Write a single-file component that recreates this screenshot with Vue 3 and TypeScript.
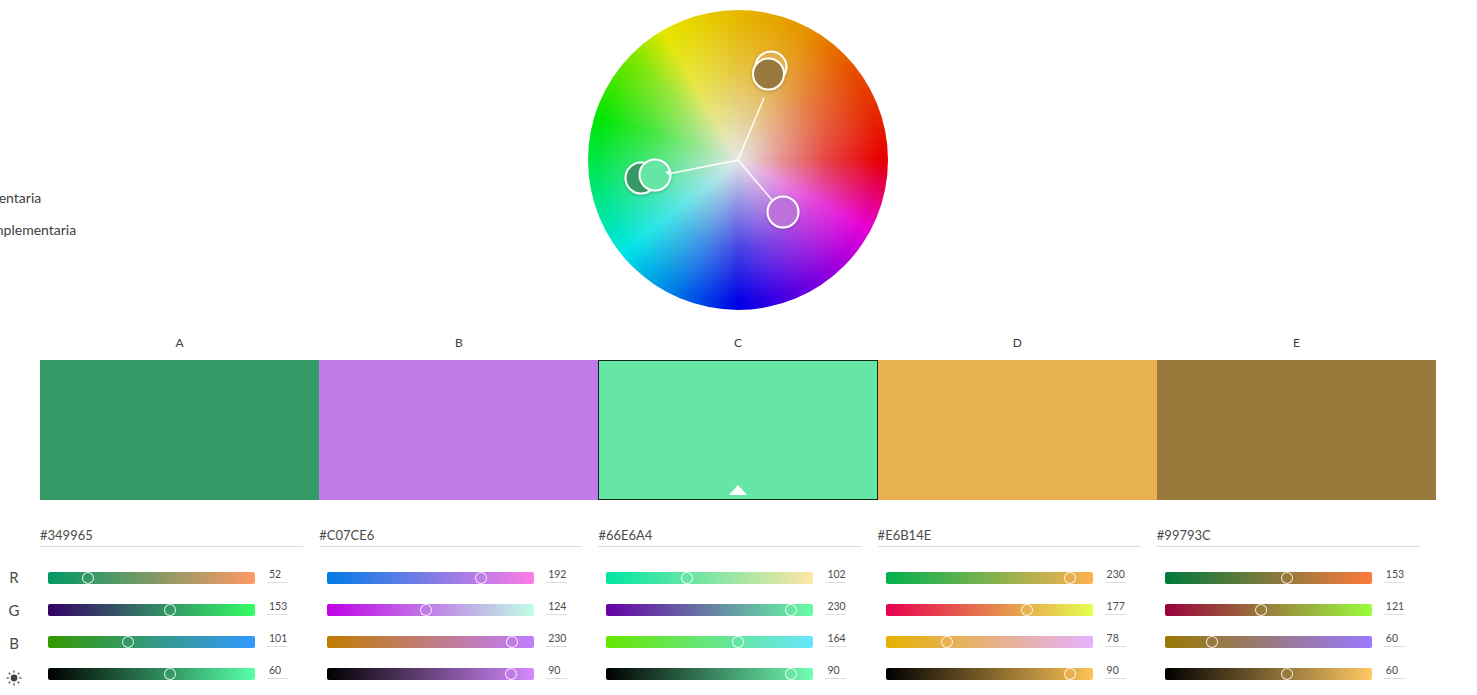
<script setup lang="ts">
type Swatch = { id: string; hex: string; rgb: [number, number, number]; bright: number }

const swatches: Swatch[] = [
  { id: 'A', hex: '#349965', rgb: [52, 153, 101], bright: 60 },
  { id: 'B', hex: '#C07CE6', rgb: [192, 124, 230], bright: 90 },
  { id: 'C', hex: '#66E6A4', rgb: [102, 230, 164], bright: 90 },
  { id: 'D', hex: '#E6B14E', rgb: [230, 177, 78], bright: 90 },
  { id: 'E', hex: '#99793C', rgb: [153, 121, 60], bright: 60 },
]

const css = (c: number[]) => `rgb(${c.map(Math.round).join(',')})`

function channels(s: Swatch) {
  const [r, g, b] = s.rgb
  const peak = Math.max(r, g, b)
  const full = s.rgb.map((v) => (v * 255) / peak)
  return [
    { v: r, pct: r / 255, from: [0, g, b], to: [255, g, b] },
    { v: g, pct: g / 255, from: [r, 0, b], to: [r, 255, b] },
    { v: b, pct: b / 255, from: [r, g, 0], to: [r, g, 255] },
    { v: s.bright, pct: s.bright / 100, from: [0, 0, 0], to: full },
  ].map((c) => ({
    value: c.v,
    track: { background: `linear-gradient(to right, ${css(c.from)}, ${css(c.to)})` },
    thumb: { left: `${c.pct * 207 - 8}px`, background: s.hex },
  }))
}

const columns = swatches.map((s) => ({ ...s, rows: channels(s) }))
const axis = ['R', 'G', 'B']
const rays = [0, 45, 90, 135, 180, 225, 270, 315]
</script>

<template>
  <div class="page">
    <section class="top">
      <ul class="rules">
        <li class="rule-a">Complementaria</li>
        <li class="rule-b">Doble complementaria</li>
      </ul>
      <div class="wheel">
        <svg class="marks" viewBox="0 0 300 300" width="300" height="300">
          <defs>
            <filter id="soft" x="-30%" y="-30%" width="160%" height="160%">
              <feDropShadow dx="0" dy="1" stdDeviation="1.5" flood-color="#000" flood-opacity="0.25" />
            </filter>
          </defs>
          <g stroke="#fff" stroke-width="1.4" fill="none">
            <line x1="150" y1="150" x2="80" y2="164" />
            <line x1="150" y1="150" x2="176" y2="88" />
            <line x1="150" y1="150" x2="184" y2="190" />
          </g>
          <g stroke="#fff" stroke-width="2" filter="url(#soft)">
            <circle cx="53" cy="168" r="15.5" fill="#349965" />
            <circle cx="67" cy="165" r="15.5" fill="#66E6A4" />
            <circle cx="183" cy="57" r="15.5" fill="#E6B14E" />
            <circle cx="180.500" cy="64" r="15.5" fill="#99793C" />
            <circle cx="195" cy="202" r="15.5" fill="#BC72DA" />
          </g>
          <path d="M77.500 162.500 L81.500 159.500 L81.500 165.500 Z" fill="#fff" />
        </svg>
      </div>
    </section>

    <div class="letters">
      <span v-for="c in columns" :key="c.id">{{ c.id }}</span>
    </div>

    <div class="swatches">
      <div
        v-for="c in columns"
        :key="c.id"
        class="swatch"
        :class="{ active: c.id === 'C' }"
        :style="{ background: c.hex }"
      >
        <i v-if="c.id === 'C'" class="caret"></i>
      </div>
    </div>

    <div class="lower">
      <div class="axis">
        <span v-for="a in axis" :key="a">{{ a }}</span>
        <span class="sun">
          <svg viewBox="0 0 16 16" width="16" height="16">
            <circle cx="8" cy="8" r="3.400" fill="#444" />
            <line
              v-for="r in rays"
              :key="r"
              x1="8"
              y1="0.600"
              x2="8"
              y2="2.800"
              stroke="#444"
              stroke-width="1.200"
              :transform="`rotate(${r} 8 8)`"
            />
          </svg>
        </span>
      </div>
      <div class="cols">
        <div v-for="c in columns" :key="c.id" class="col">
          <div class="hex">{{ c.hex }}</div>
          <div class="rows">
            <div v-for="(row, i) in c.rows" :key="i" class="row">
              <div class="track" :style="row.track">
                <span class="thumb" :style="row.thumb"></span>
              </div>
              <span class="val">{{ row.value }}</span>
            </div>
          </div>
        </div>
      </div>
    </div>
  </div>
</template>

<style>
html,
body {
  margin: 0;
  background: #fff;
  overflow: hidden;
}
</style>

<style scoped>
.page {
  width: 1477px;
  height: 695px;
  overflow: hidden;
  font-family: Lato, 'Open Sans', sans-serif;
  color: #4b4b4b;
  background: #fff;
}
.top {
  position: relative;
  height: 336px;
  padding: 10px 1px 0 0;
  box-sizing: border-box;
  display: flex;
  justify-content: center;
}
.rules {
  position: absolute;
  left: 0;
  top: 182px;
  margin: 0;
  padding: 0;
  list-style: none;
  font-size: 14px;
  line-height: 32px;
  white-space: nowrap;
  color: #3d3d3d;
}
.rule-a {
  margin-left: -60px;
}
.rule-b {
  margin-left: -63px;
}
.wheel {
  position: relative;
  width: 300px;
  height: 300px;
  border-radius: 50%;
  background:
    radial-gradient(circle closest-side, #e6e6e6 0%, rgba(230, 230, 230, 0.64) 28%, rgba(230, 230, 230, 0.3) 58%, rgba(230, 230, 230, 0) 94%),
    conic-gradient(
      #e6b800 0deg,
      #e69500 27deg,
      #e64e00 53deg,
      #e60000 90deg,
      #e600d8 118deg,
      #7a00e0 148deg,
      #0000e6 180deg,
      #0078e6 205deg,
      #00e6e6 231deg,
      #00e68a 253deg,
      #00e600 287deg,
      #80e600 315deg,
      #e6e600 330deg,
      #e6b800 360deg
    );
}
.marks {
  position: absolute;
  inset: 0;
  overflow: visible;
}
.letters,
.swatches {
  display: grid;
  grid-template-columns: repeat(5, 1fr);
  margin: 0 41px 0 40px;
}
.letters {
  height: 24px;
  font-size: 12px;
  line-height: 14px;
  text-align: center;
  color: #3d3d3d;
}
.swatches {
  height: 140px;
}
.swatch {
  position: relative;
  box-sizing: border-box;
}
.swatch.active {
  border: 1px solid #10261b;
}
.caret {
  position: absolute;
  left: 50%;
  bottom: 4px;
  margin-left: -9px;
  border-left: 9px solid transparent;
  border-right: 9px solid transparent;
  border-bottom: 10px solid #fff;
}
.lower {
  display: flex;
  padding-top: 26px;
}
.axis {
  width: 28px;
  margin-right: 12px;
  padding-top: 35px;
  display: flex;
  flex-direction: column;
  align-items: center;
  font-size: 15px;
  color: #4b4b4b;
}
.axis span {
  height: 33px;
  line-height: 33px;
}
.axis .sun {
  display: flex;
  align-items: center;
  margin-top: 1px;
}
.cols {
  flex: 1;
  display: grid;
  grid-template-columns: repeat(5, 1fr);
  margin-right: 41px;
}
.hex {
  margin-right: 16px;
  height: 20px;
  line-height: 18px;
  font-size: 13px;
  border-bottom: 1px solid #dcdcdc;
  color: #4b4b4b;
}
.rows {
  padding: 15px 0 0 8px;
}
.row {
  display: flex;
  height: 32px;
}
.track {
  position: relative;
  width: 207px;
  height: 12px;
  margin-top: 10px;
  border-radius: 2px;
}
.thumb {
  position: absolute;
  top: 0;
  box-sizing: border-box;
  width: 12px;
  height: 12px;
  border: 1.500px solid rgba(255, 255, 255, 0.85);
  border-radius: 50%;
}
.val {
  margin: 6px 0 0 12px;
  width: 21px;
  height: 15px;
  padding-left: 2px;
  box-sizing: border-box;
  border-bottom: 1px solid #dedede;
  font-size: 10.5px;
  line-height: 12px;
  color: #4b4b4b;
}
</style>
